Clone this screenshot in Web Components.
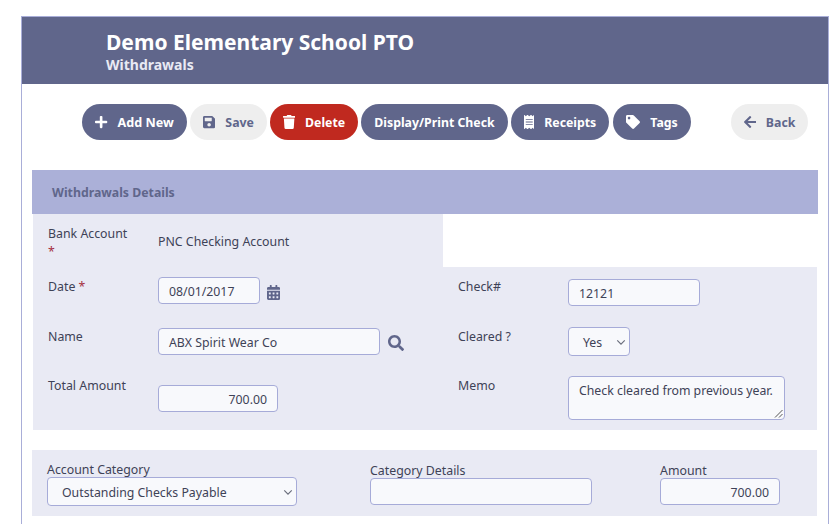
<!DOCTYPE html>
<html lang="en">
<head>
<meta charset="utf-8">
<title>Withdrawals</title>
<style>
    html, body { margin: 0; padding: 0; height: 100%; overflow: hidden; background: #fff; }
    body { font-family: "Noto Sans", "Open Sans", sans-serif; font-size: 12.35px; color: #3e4257; }
</style>
</head>
<body>

<app-frame>
    <page-header slot="header" title-text="Demo Elementary School PTO" sub-text="Withdrawals"></page-header>

    <tool-bar>
        <pill-button icon="plus" width="105" style="font-size: 12.6px">Add New</pill-button>
        <pill-button icon="save" kind="light" width="77">Save</pill-button>
        <pill-button icon="trash" kind="danger" width="88">Delete</pill-button>
        <pill-button width="147">Display/Print Check</pill-button>
        <pill-button icon="receipt" width="98">Receipts</pill-button>
        <pill-button icon="tag" width="78" style="margin-left: 1px">Tags</pill-button>
        <pill-button icon="back" kind="light" slot="end" width="77">Back</pill-button>
    </tool-bar>

    <details-panel heading="Withdrawals Details">
        <field-row slot="bank" label="Bank Account" required style="--value-top: 9px">PNC Checking Account</field-row>

        <field-row label="Date" required>
            <form-box width="102">08/01/2017</form-box>
            <svg-icon name="calendar" size="15" style="margin: 8px 0 0 7px"></svg-icon>
        </field-row>
        <field-row label="Check#" style="--value-top: 2px">
            <form-box width="132">12121</form-box>
        </field-row>

        <field-row label="Name" style="--value-top: 1px">
            <form-box width="222">ABX Spirit Wear Co</form-box>
            <svg-icon name="search" size="16" style="margin: 7px 0 0 8px"></svg-icon>
        </field-row>
        <field-row label="Cleared ?">
            <form-box width="62" height="29" kind="select" pad="14">Yes</form-box>
        </field-row>

        <field-row label="Total Amount" style="--value-top: 9px">
            <form-box width="120" align="right">700.00</form-box>
        </field-row>
        <field-row label="Memo">
            <form-box width="217" height="44" kind="memo">Check cleared from previous year.</form-box>
        </field-row>
    </details-panel>

    <category-line>
        <stacked-field label="Account Category" style="--field-top: -1px">
            <form-box width="250" height="29" kind="select" pad="14">Outstanding Checks Payable</form-box>
        </stacked-field>
        <stacked-field label="Category Details">
            <form-box width="222"></form-box>
        </stacked-field>
        <stacked-field label="Amount">
            <form-box width="120" align="right">700.00</form-box>
        </stacked-field>
    </category-line>
</app-frame>

<script>
// FontAwesome style glyphs, viewBox width + path
const ICONS = {
    plus: [448, 'M416 208H272V64c0-17.67-14.33-32-32-32h-32c-17.67 0-32 14.33-32 32v144H32c-17.67 0-32 14.33-32 32v32c0 17.67 14.33 32 32 32h144v144c0 17.67 14.33 32 32 32h32c17.67 0 32-14.33 32-32V304h144c17.67 0 32-14.33 32-32v-32c0-17.67-14.33-32-32-32z'],
    save: [448, 'M433.941 129.941l-83.882-83.882A48 48 0 0 0 316.118 32H48C21.49 32 0 53.49 0 80v352c0 26.51 21.49 48 48 48h352c26.51 0 48-21.49 48-48V163.882a48 48 0 0 0-14.059-33.941zM224 416c-35.346 0-64-28.654-64-64 0-35.346 28.654-64 64-64s64 28.654 64 64c0 35.346-28.654 64-64 64zm96-304.52V212c0 6.627-5.373 12-12 12H76c-6.627 0-12-5.373-12-12V108c0-6.627 5.373-12 12-12h228.52c3.183 0 6.235 1.264 8.485 3.515l3.48 3.48A11.996 11.996 0 0 1 320 111.48z'],
    trash: [448, 'M432 32H312l-9.4-18.7A24 24 0 0 0 281.1 0H166.8a23.72 23.72 0 0 0-21.4 13.3L136 32H16A16 16 0 0 0 0 48v32a16 16 0 0 0 16 16h416a16 16 0 0 0 16-16V48a16 16 0 0 0-16-16zM53.2 467a48 48 0 0 0 47.9 45h245.8a48 48 0 0 0 47.9-45L416 128H32z'],
    receipt: [384, 'M358.4 3.2L320 48 265.6 3.2a15.9 15.9 0 0 0-19.2 0L192 48 137.6 3.2a15.9 15.9 0 0 0-19.2 0L64 48 25.6 3.2C15-4.7 0 2.8 0 16v480c0 13.2 15 20.7 25.6 12.8L64 464l54.4 44.8a15.9 15.9 0 0 0 19.2 0L192 464l54.4 44.8a15.9 15.9 0 0 0 19.2 0L320 464l38.4 44.8c10.5 7.9 25.6.4 25.6-12.8V16c0-13.2-15-20.7-25.6-12.8zM320 360c0 4.4-3.6 8-8 8H72c-4.4 0-8-3.6-8-8v-16c0-4.4 3.6-8 8-8h240c4.4 0 8 3.6 8 8v16zm0-96c0 4.4-3.6 8-8 8H72c-4.4 0-8-3.6-8-8v-16c0-4.4 3.6-8 8-8h240c4.4 0 8 3.6 8 8v16zm0-96c0 4.4-3.6 8-8 8H72c-4.4 0-8-3.6-8-8v-16c0-4.4 3.6-8 8-8h240c4.4 0 8 3.6 8 8v16z'],
    tag: [512, 'M0 252.118V48C0 21.49 21.49 0 48 0h204.118a48 48 0 0 1 33.941 14.059l211.882 211.882c18.745 18.745 18.745 49.137 0 67.882L293.823 497.941c-18.745 18.745-49.137 18.745-67.882 0L14.059 286.059A48 48 0 0 1 0 252.118zM112 64c-26.51 0-48 21.49-48 48s21.49 48 48 48 48-21.49 48-48-21.49-48-48-48z'],
    back: [448, 'M257.5 445.1l-22.2 22.2c-9.4 9.4-24.6 9.4-33.9 0L7 273c-9.4-9.4-9.4-24.6 0-33.9L201.4 44.7c9.4-9.4 24.6-9.4 33.9 0l22.2 22.2c9.5 9.5 9.3 25-.4 34.3L136.6 216H424c13.3 0 24 10.7 24 24v32c0 13.3-10.7 24-24 24H136.6l120.5 114.8c9.8 9.3 10 24.8.4 34.3z'],
    calendar: [448, 'M0 464c0 26.5 21.5 48 48 48h352c26.5 0 48-21.5 48-48V192H0v272zm320-196c0-6.6 5.4-12 12-12h40c6.6 0 12 5.4 12 12v40c0 6.6-5.4 12-12 12h-40c-6.6 0-12-5.4-12-12v-40zm0 128c0-6.6 5.4-12 12-12h40c6.6 0 12 5.4 12 12v40c0 6.6-5.4 12-12 12h-40c-6.6 0-12-5.4-12-12v-40zM192 268c0-6.6 5.4-12 12-12h40c6.6 0 12 5.4 12 12v40c0 6.6-5.4 12-12 12h-40c-6.6 0-12-5.4-12-12v-40zm0 128c0-6.6 5.4-12 12-12h40c6.6 0 12 5.4 12 12v40c0 6.6-5.4 12-12 12h-40c-6.6 0-12-5.4-12-12v-40zM64 268c0-6.6 5.4-12 12-12h40c6.6 0 12 5.4 12 12v40c0 6.6-5.4 12-12 12H76c-6.6 0-12-5.4-12-12v-40zm0 128c0-6.6 5.4-12 12-12h40c6.6 0 12 5.4 12 12v40c0 6.6-5.4 12-12 12H76c-6.6 0-12-5.4-12-12v-40zM400 64h-48V16c0-8.8-7.2-16-16-16h-32c-8.8 0-16 7.2-16 16v48H160V16c0-8.8-7.2-16-16-16h-32c-8.8 0-16 7.2-16 16v48H48C21.5 64 0 85.5 0 112v48h448v-48c0-26.5-21.5-48-48-48z'],
    search: [512, 'M505 442.7L405.3 343c-4.5-4.5-10.6-7-17-7H372c27.6-35.3 44-79.7 44-128C416 93.1 322.9 0 208 0S0 93.1 0 208s93.1 208 208 208c48.3 0 92.7-16.4 128-44v16.3c0 6.4 2.5 12.5 7 17l99.7 99.7c9.4 9.4 24.6 9.4 33.9 0l28.3-28.3c9.4-9.4 9.4-24.6.1-34zM208 336c-70.7 0-128-57.2-128-128 0-70.7 57.2-128 128-128 70.7 0 128 57.2 128 128 0 70.7-57.2 128-128 128z']
};

// Page frame with the thin lilac outline
class AppFrame extends HTMLElement {
    constructor() {
        super();
        this.attachShadow({ mode: 'open' });
    }

    connectedCallback() {
        this.shadowRoot.innerHTML = `
            <style>
                :host {
                    display: block;
                    box-sizing: border-box;
                    width: 808px;
                    height: 508px;
                    margin: 16px 0 0 21px;
                    border: 1px solid #a9aed8;
                    border-bottom: none;
                    overflow: hidden;
                }
            </style>
            <slot name="header"></slot>
            <slot></slot>
        `;
    }
}

class PageHeader extends HTMLElement {
    constructor() {
        super();
        this.attachShadow({ mode: 'open' });
    }

    connectedCallback() {
        this.shadowRoot.innerHTML = `
            <style>
                :host {
                    display: block;
                    box-sizing: border-box;
                    height: 67px;
                    padding: 13px 0 0 84px;
                    background: #60668b;
                }
                h1 {
                    margin: 0;
                    font-size: 21px;
                    line-height: 24px;
                    font-weight: 700;
                    color: #fff;
                }
                p {
                    margin: 1px 0 0;
                    font-size: 14px;
                    line-height: 20px;
                    font-weight: 700;
                    color: #e9eaf4;
                }
            </style>
            <h1>${this.getAttribute('title-text')}</h1>
            <p>${this.getAttribute('sub-text')}</p>
        `;
    }
}

class SvgIcon extends HTMLElement {
    constructor() {
        super();
        this.attachShadow({ mode: 'open' });
    }

    connectedCallback() {
        const [w, d] = ICONS[this.getAttribute('name')];
        const size = this.getAttribute('size') || 14;
        this.shadowRoot.innerHTML = `
            <style>
                :host { display: inline-block; line-height: 0; color: var(--icon-color, #60668b); }
                svg { display: block; fill: currentColor; }
            </style>
            <svg xmlns="http://www.w3.org/2000/svg" viewBox="0 0 ${w} 512" height="${size}" width="${size * w / 512}"><path d="${d}"/></svg>
        `;
    }
}

class ToolBar extends HTMLElement {
    constructor() {
        super();
        this.attachShadow({ mode: 'open' });
    }

    connectedCallback() {
        this.shadowRoot.innerHTML = `
            <style>
                :host {
                    display: flex;
                    justify-content: space-between;
                    padding: 20px 20px 30px 60px;
                }
                .group { display: flex; gap: 3px; }
            </style>
            <div class="group"><slot></slot></div>
            <slot name="end"></slot>
        `;
    }
}

class PillButton extends HTMLElement {
    constructor() {
        super();
        this.attachShadow({ mode: 'open' });
    }

    connectedCallback() {
        const icon = this.getAttribute('icon');
        const iconMarkup = icon ? `<svg-icon name="${icon}" size="14"></svg-icon>` : '';
        this.shadowRoot.innerHTML = `
            <style>
                :host {
                    display: inline-flex;
                    align-items: center;
                    justify-content: center;
                    gap: 10px;
                    box-sizing: border-box;
                    width: ${this.getAttribute('width')}px;
                    height: 36px;
                    border-radius: 18px;
                    background: #60668b;
                    color: #fff;
                    --icon-color: #fff;
                    font-size: 12.3px;
                    font-weight: 700;
                    white-space: nowrap;
                }
                :host([kind="light"]) {
                    background: #eeeeee;
                    color: #60668b;
                    --icon-color: #60668b;
                }
                :host([kind="danger"]) { background: #c0291f; }
            </style>
            ${iconMarkup}<slot></slot>
        `;
    }
}

class DetailsPanel extends HTMLElement {
    constructor() {
        super();
        this.attachShadow({ mode: 'open' });
    }

    connectedCallback() {
        this.shadowRoot.innerHTML = `
            <style>
                :host {
                    display: block;
                    width: 786px;
                    margin-left: 10px;
                }
                h2 {
                    margin: 0;
                    height: 44px;
                    padding-left: 20px;
                    background: #abb0d8;
                    color: #60668b;
                    font-size: 12.3px;
                    line-height: 46px;
                    font-weight: 700;
                }
                .bank {
                    width: 410px;
                    height: 53px;
                    margin-left: 1px;
                    padding-top: 10px;
                    box-sizing: border-box;
                    background: #e9eaf4;
                }
                .fields {
                    display: grid;
                    grid-template-columns: 410px 374px;
                    grid-template-rows: 50px 49px 54px;
                    margin-left: 1px;
                    width: 784px;
                    box-sizing: border-box;
                    height: 163px;
                    padding-top: 10px;
                    background: #e9eaf4;
                }
            </style>
            <h2>${this.getAttribute('heading')}</h2>
            <div class="bank"><slot name="bank"></slot></div>
            <div class="fields"><slot></slot></div>
        `;
    }
}

// Label on the left, value on the right
class FieldRow extends HTMLElement {
    constructor() {
        super();
        this.attachShadow({ mode: 'open' });
    }

    connectedCallback() {
        const star = this.hasAttribute('required') ? ' <span class="req">*</span>' : '';
        this.shadowRoot.innerHTML = `
            <style>
                :host {
                    display: grid;
                    grid-template-columns: 110px 1fr;
                    align-items: start;
                    padding-left: 15px;
                    line-height: 18px;
                }
                .label { padding: var(--label-top, 1px) 26px 0 0; }
                .value { display: flex; align-items: flex-start; padding-top: var(--value-top, 0); }
                .req { color: #a5303f; }
            </style>
            <div class="label">${this.getAttribute('label')}${star}</div>
            <div class="value"><slot></slot></div>
        `;
    }
}

// Looks like an input, a select or a textarea; text stays as real text
class FormBox extends HTMLElement {
    constructor() {
        super();
        this.attachShadow({ mode: 'open' });
    }

    connectedCallback() {
        const kind = this.getAttribute('kind');
        const w = this.getAttribute('width');
        const h = this.getAttribute('height') || 27;
        let extra = '';
        if (kind === 'select') {
            extra = `<svg class="chev" viewBox="0 0 12 8" width="10" height="7"><path d="M1.5 1.5 6 6l4.5-4.5" fill="none" stroke="#6a6e7c" stroke-width="1.4"/></svg>`;
        } else if (kind === 'memo') {
            extra = `<svg class="grip" viewBox="0 0 9 9" width="9" height="9"><path d="M1 8.5 8.5 1M5 8.5 8.5 5" stroke="#555" stroke-width="1" fill="none"/></svg>`;
        }
        this.shadowRoot.innerHTML = `
            <style>
                :host {
                    display: flex;
                    align-items: ${kind === 'memo' ? 'flex-start' : 'center'};
                    justify-content: ${this.getAttribute('align') === 'right' ? 'flex-end' : 'flex-start'};
                    position: relative;
                    flex: none;
                    box-sizing: border-box;
                    width: ${w}px;
                    height: ${h}px;
                    padding: ${kind === 'memo' ? '5px' : '3px'} 10px 0 ${this.getAttribute('pad') || 10}px;
                    border: 1px solid #a6abd8;
                    border-radius: 4px;
                    background: #f8f9fc;
                    color: #3e4257;
                    font-size: 12.3px;
                    line-height: 18px;
                    white-space: nowrap;
                }
                .chev { position: absolute; right: 3px; top: 50%; margin-top: -3px; }
                .grip { position: absolute; right: 1px; bottom: 1px; }
            </style>
            <slot></slot>${extra}
        `;
    }
}

class CategoryLine extends HTMLElement {
    constructor() {
        super();
        this.attachShadow({ mode: 'open' });
    }

    connectedCallback() {
        this.shadowRoot.innerHTML = `
            <style>
                :host {
                    display: grid;
                    grid-template-columns: 323px 290px 1fr;
                    box-sizing: border-box;
                    width: 785px;
                    height: 66px;
                    margin: 20px 0 0 10px;
                    padding: 11px 0 0 15px;
                    background: #e9eaf4;
                }
            </style>
            <slot></slot>
        `;
    }
}

class StackedField extends HTMLElement {
    constructor() {
        super();
        this.attachShadow({ mode: 'open' });
    }

    connectedCallback() {
        this.shadowRoot.innerHTML = `
            <style>
                :host { display: block; margin-top: var(--field-top, 0); }
                .label { line-height: 18px; padding-top: 1px; margin-bottom: -2px; }
            </style>
            <div class="label">${this.getAttribute('label')}</div>
            <slot></slot>
        `;
    }
}

customElements.define('svg-icon', SvgIcon);
customElements.define('app-frame', AppFrame);
customElements.define('page-header', PageHeader);
customElements.define('tool-bar', ToolBar);
customElements.define('pill-button', PillButton);
customElements.define('details-panel', DetailsPanel);
customElements.define('field-row', FieldRow);
customElements.define('form-box', FormBox);
customElements.define('category-line', CategoryLine);
customElements.define('stacked-field', StackedField);
</script>
</body>
</html>
